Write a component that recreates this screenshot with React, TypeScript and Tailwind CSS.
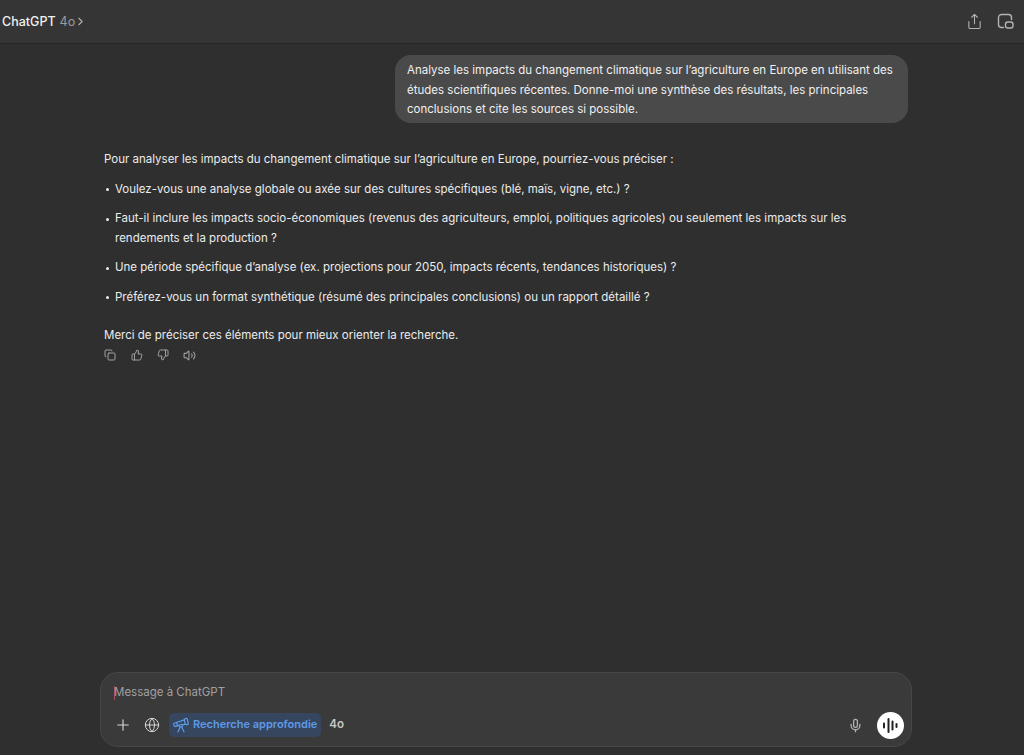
import { ChevronRight, Plus, Globe, Mic, Telescope, Copy, ThumbsUp, ThumbsDown, Volume2, Share } from "lucide-react";

const bullets = [
  "Voulez-vous une analyse globale ou axée sur des cultures spécifiques (blé, maïs, vigne, etc.) ?",
  "Faut-il inclure les impacts socio-économiques (revenus des agriculteurs, emploi, politiques agricoles) ou seulement les impacts sur les rendements et la production ?",
  "Une période spécifique d’analyse (ex. projections pour 2050, impacts récents, tendances historiques) ?",
  "Préférez-vous un format synthétique (résumé des principales conclusions) ou un rapport détaillé ?",
];

export default function App() {
  return (
    <div className="h-[755px] w-[1024px] overflow-hidden flex flex-col bg-[#2f2f2f] text-[11.5px] leading-[19.5px] text-[#ececec] font-['Inter',sans-serif]">
      {/* Header */}
      <header className="h-[44px] flex-shrink-0 bg-[#353535] border-b border-[#262626] flex items-center justify-between pl-[2px] pr-[10px]">
        <div className="flex items-center gap-[4px] text-[12.5px]">
          <span className="font-medium text-[#f0f0f0]">ChatGPT</span>
          <span className="text-[#9a9a9a] text-[12.5px]">4o</span>
          <ChevronRight size={13} strokeWidth={2} className="text-[#b0b0b0] -ml-[5px]" />
        </div>
        <div className="flex items-center gap-[14px] text-[#b4b4b4]">
          <Share size={17} strokeWidth={1.5} />
          <svg width="17" height="17" viewBox="0 0 17 17" fill="none" stroke="currentColor" strokeWidth="1.4" strokeLinecap="round">
            <path d="M6.5 14.5H4.5a3 3 0 0 1-3-3v-7a3 3 0 0 1 3-3h7a3 3 0 0 1 3 3v2" />
            <rect x="8.5" y="9" width="7.5" height="6" rx="2.2" />
          </svg>
        </div>
      </header>

      {/* Conversation */}
      <main className="flex-1 flex flex-col pl-[104px] pr-[116px] pt-[11px]">
        <div className="self-end w-[513px] rounded-[16px] bg-[#4a4a4a] px-[12px] pt-[6px] pb-[3.5px] text-[#f0f0f0]">
          Analyse les impacts du changement climatique sur l’agriculture en Europe en utilisant des études scientifiques récentes. Donne-moi une synthèse des résultats, les principales conclusions et cite les sources si possible.
        </div>

        <p className="mt-[27px]">Pour analyser les impacts du changement climatique sur l’agriculture en Europe, pourriez-vous préciser :</p>
        <ul className="mt-[10px] flex flex-col gap-[10px]">
          {bullets.map((b) => (
            <li key={b} className="flex">
              <span className="w-[3px] h-[3px] mt-[8.5px] ml-[2px] mr-[6px] rounded-full bg-[#ececec] flex-shrink-0"></span>
              <span className="w-[738px]">{b}</span>
            </li>
          ))}
        </ul>
        <p className="mt-[19px]">Merci de préciser ces éléments pour mieux orienter la recherche.</p>
        <div className="mt-[3px] flex items-center gap-[15px] text-[#a0a0a0]">
          <Copy size={12} />
          <ThumbsUp size={12} />
          <ThumbsDown size={12} className="-ml-[1px]" />
          <Volume2 size={13} className="-ml-[1px]" />
        </div>
      </main>

      {/* Composer */}
      <div className="h-[75px] ml-[100px] w-[812px] mb-[8px] flex-shrink-0 rounded-[18px] bg-[#3a3a3a] border border-[#474747] flex flex-col pl-[13px] pr-[7px]">
        <div className="mt-[10px] text-[#a0a0a0] flex items-center">
          <span className="w-[1px] h-[14px] -mr-[1px] bg-[#a34f5c]"></span>
          <span>Message à ChatGPT</span>
        </div>
        <div className="mt-[9px] flex items-center">
          <Plus size={18} strokeWidth={1.5} className="text-[#d8d8d8]" />
          <Globe size={16} strokeWidth={1.5} className="ml-[12px] text-[#d8d8d8]" />
          <div className="ml-[9px] h-[24px] pl-[3px] pr-[4px] rounded-[5px] bg-[#36465f] flex items-center gap-[3px] text-[11px] font-semibold text-[#5e9ae6]">
            <Telescope size={18} strokeWidth={1.6} />
            <span>Recherche approfondie</span>
          </div>
          <span className="ml-[8px] text-[11.5px] font-semibold text-[#c8c8c8]">4o</span>
          <Mic size={15} strokeWidth={2} className="ml-auto text-[#b4b4b4]" />
          <div className="ml-[14px] w-[27px] h-[27px] rounded-full bg-white flex items-center justify-center">
            <svg width="15" height="15" viewBox="0 0 15 15" fill="none" stroke="#222" strokeWidth="2" strokeLinecap="round">
              <path d="M1 5.5v4M5.5 1v13M9.5 3.5v8M13.5 6v3" />
            </svg>
          </div>
        </div>
      </div>
    </div>
  );
}
